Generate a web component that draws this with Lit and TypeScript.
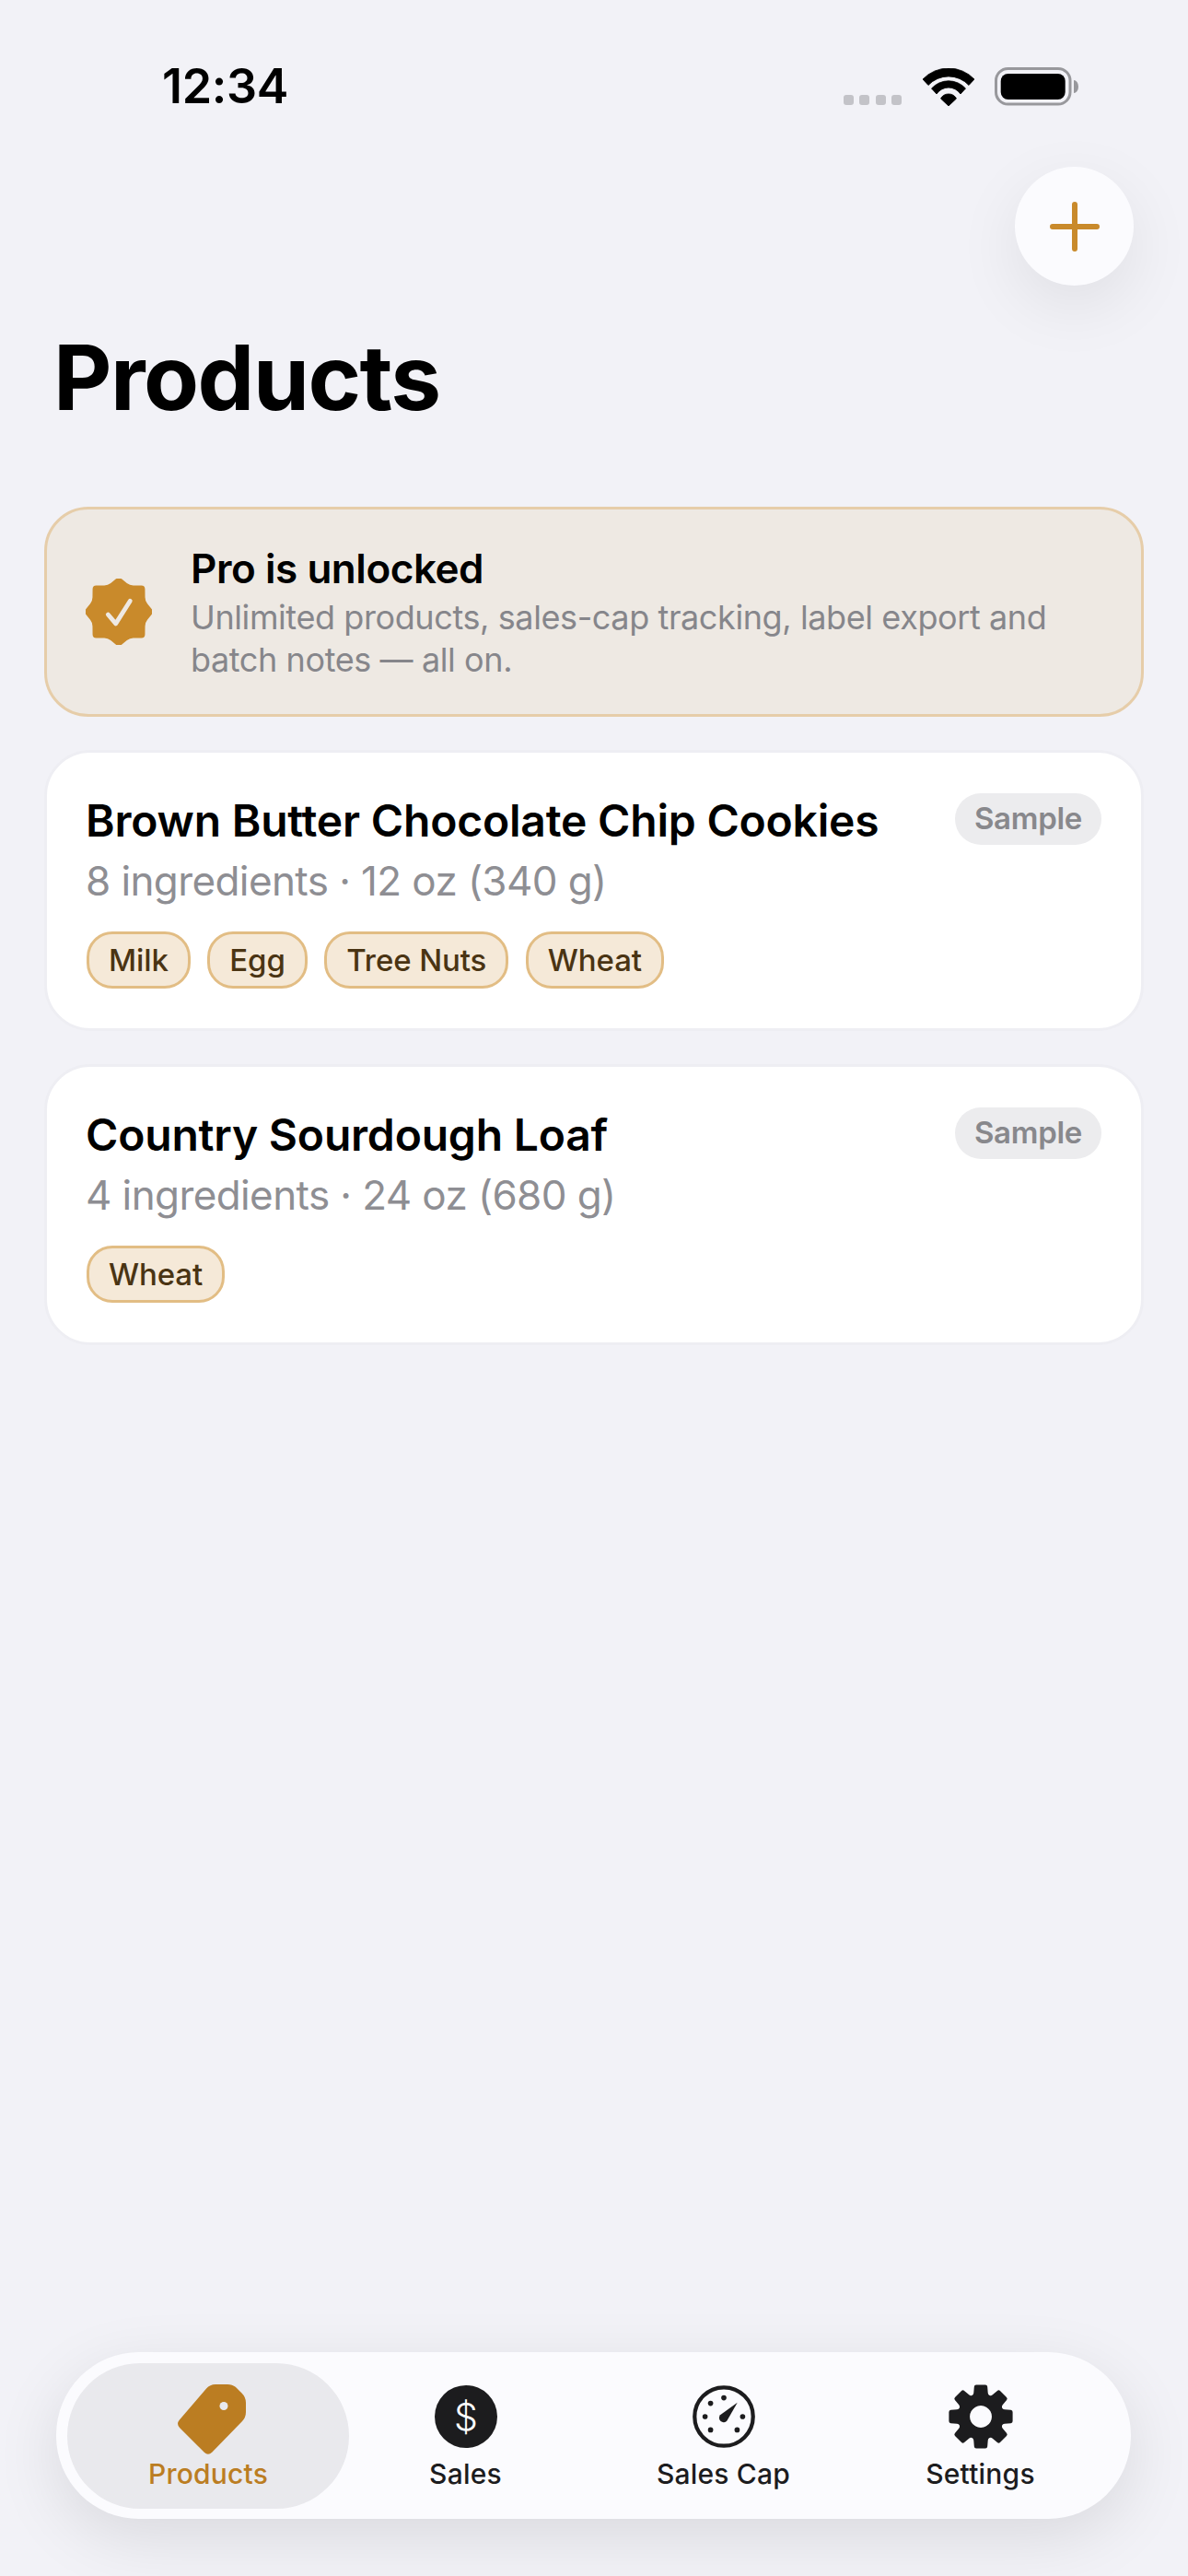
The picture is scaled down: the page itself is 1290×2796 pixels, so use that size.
import { LitElement, html, css, svg } from "lit";
import { customElement } from "lit/decorators.js";

type Pt = [number, number];

// Closed polygon whose corners are rounded by a quadratic curve, `r` units back from each vertex.
function roundPoly(pts: Pt[], r: number): string {
  const n = pts.length;
  let d = "";
  for (let i = 0; i < n; i++) {
    const v = pts[i];
    const prev = pts[(i + n - 1) % n];
    const next = pts[(i + 1) % n];
    const toward = (a: Pt, b: Pt): Pt => {
      const dx = b[0] - a[0];
      const dy = b[1] - a[1];
      const len = Math.hypot(dx, dy);
      const k = Math.min(r, len / 2) / len;
      return [a[0] + dx * k, a[1] + dy * k];
    };
    const a = toward(v, prev);
    const b = toward(v, next);
    d += `${i ? "L" : "M"}${a[0].toFixed(2)} ${a[1].toFixed(2)} Q${v[0].toFixed(2)} ${v[1].toFixed(2)} ${b[0].toFixed(2)} ${b[1].toFixed(2)} `;
  }
  return d + "Z";
}

const polar = (rad: number, ang: number, c = 12): Pt => [c + rad * Math.cos(ang), c + rad * Math.sin(ang)];

const gearPts: Pt[] = [];
for (let i = 0; i < 8; i++) {
  const a = (i * 2 * Math.PI) / 8 - Math.PI / 2;
  gearPts.push(polar(8.6, a - 0.32), polar(12.1, a - 0.2), polar(12.1, a + 0.2), polar(8.6, a + 0.32));
}
const gearPath = roundPoly(gearPts, 0.7) + " M12 7.900 a4.100 4.100 0 1 0 .01 0Z";

const badgePts: Pt[] = [];
for (let i = 0; i < 8; i++) {
  const a = (i * 2 * Math.PI) / 8 - Math.PI / 2;
  const tip = i % 2 === 0 ? 12.7 : 13.4;
  badgePts.push(polar(tip, a), polar(10.3, a + Math.PI / 8));
}
const badgePath = roundPoly(badgePts, 1.3);

const tagPath = roundPoly(
  [[37, 0], [62, 0], [76, 14], [76, 36], [35, 78], [0, 43]],
  6,
);

const dial = [0, 90, 135, 225, 270, 315].map((deg) => {
  const a = ((deg - 90) * Math.PI) / 180;
  return svg`<circle cx=${12 + 7.2 * Math.cos(a)} cy=${12 + 7.2 * Math.sin(a)} r="1" fill="#1c1c1e"></circle>`;
});

@customElement("app-root")
export class AppRoot extends LitElement {
  static styles = css`
    :host {
      display: block;
      width: 1290px;
      height: 2796px;
      background: #f2f2f7;
      font-family: Inter, "Liberation Sans", sans-serif;
      position: relative;
      overflow: hidden;
      color: #000;
    }
    .status {
      height: 181px;
      display: flex;
      justify-content: space-between;
      align-items: flex-start;
      box-sizing: border-box;
      padding: 63px 119px 0 176px;
    }
    .time {
      font-size: 52px;
      line-height: 62px;
      font-weight: 600;
      letter-spacing: -0.3px;
    }
    .sys {
      display: flex;
      align-items: flex-end;
      margin-top: 10px;
    }
    .dots {
      display: flex;
      gap: 6.5px;
      margin-right: 23px;
      margin-bottom: 1px;
    }
    .dots i {
      width: 11px;
      height: 11px;
      border-radius: 3px;
      background: #c3c3c8;
    }
    .wifi { width: 56px; height: 41px; margin-right: 22px; display: block; }
    .batt { width: 91px; height: 42px; display: block; }
    .fab-row {
      display: flex;
      justify-content: flex-end;
      padding-right: 59px;
      height: 129px;
    }
    .fab {
      width: 129px;
      height: 129px;
      border-radius: 50%;
      background: #fbfbfe;
      box-shadow: 0 22px 70px rgba(0, 0, 0, 0.08);
      display: flex;
      align-items: center;
      justify-content: center;
    }
    .fab svg { width: 54px; height: 54px; display: block; }
    h1 {
      margin: 41px 0 0;
      padding-left: 58px;
      font-size: 98px;
      line-height: 118px;
      font-weight: 700;
      letter-spacing: -1.5px;
    }
    .list {
      margin-top: 81px;
      padding: 0 48px;
      display: flex;
      flex-direction: column;
      gap: 36px;
    }
    .banner {
      box-sizing: border-box;
      height: 228px;
      border: 3px solid #e6cda9;
      border-radius: 48px;
      background: #eee9e3;
      display: flex;
      align-items: center;
      padding-left: 42px;
    }
    .banner svg { width: 72px; height: 72px; flex: none; display: block; margin-right: 42px; }
    .banner .t { font-size: 44px; line-height: 54px; font-weight: 600; letter-spacing: -0.45px; }
    .banner .s { font-size: 36px; line-height: 46px; color: #86868b; margin-top: 3px; letter-spacing: -0.4px; }
    .card {
      box-sizing: border-box;
      height: 305px;
      background: #fff;
      border: 3px solid #eeeef3;
      border-radius: 50px;
      padding: 44px 42px 0;
      position: relative;
    }
    .title { font-size: 48px; line-height: 60px; font-weight: 600; letter-spacing: -0.2px; }
    .sub { font-size: 44px; line-height: 56px; color: #8e8e93; margin-top: 7px; letter-spacing: -0.6px; }
    .pill {
      position: absolute;
      right: 43px;
      top: 44px;
      height: 56px;
      padding: 0 21px;
      border-radius: 28px;
      background: #ececee;
      color: #88888c;
      font-size: 33px;
      font-weight: 600;
      line-height: 55px;
      letter-spacing: -0.3px;
    }
    .tags { display: flex; gap: 18.5px; margin: 27px 0 0 1px; }
    .tag {
      box-sizing: border-box;
      height: 62px;
      padding: 0 21px;
      border: 3px solid #e2bd84;
      border-radius: 28px;
      background: #f5e9d8;
      color: #4a3413;
      font-size: 33px;
      font-weight: 500;
      line-height: 56px;
      letter-spacing: -0.1px;
    }
    .tabbar {
      position: absolute;
      left: 61px;
      top: 2553px;
      width: 1167px;
      height: 181px;
      box-sizing: border-box;
      border-radius: 90px;
      background: #fbfbfe;
      box-shadow: 0 20px 70px rgba(0, 0, 0, 0.1);
      display: grid;
      grid-template-columns: 304px 257px 303px 255px;
      padding: 12px 12px 11px;
    }
    .tab {
      display: flex;
      flex-direction: column;
      align-items: center;
      color: #1c1c1e;
      font-size: 30px;
      font-weight: 500;
      line-height: 36px;
      letter-spacing: 0.2px;
      padding-top: 24px;
    }
    .tab svg { width: 68px; height: 68px; display: block; margin-bottom: 10px; }
    .tab svg.tagi { width: 76px; height: 78px; margin: -1px 0 1px 6px; }
    .tab svg.gear { width: 70px; height: 70px; margin: -1px 0 9px; }
    .tab.on {
      background: #e9e9ed;
      border-radius: 79px;
      color: #bb7d22;
      width: 306px;
    }
  `;

  render() {
    return html`
      <div class="status">
        <div class="time">12:34</div>
        <div class="sys">
          <div class="dots"><i></i><i></i><i></i><i></i></div>
          <svg class="wifi" viewBox="0 0 56 41">
            <path d="M0 12 A38.700 38.700 0 0 1 56 12 L50 18.500 A30 30 0 0 0 6 18.500 Z" fill="#000" stroke="#000" stroke-width="0.800" stroke-linejoin="round"></path>
            <path d="M9.500 22 A25 25 0 0 1 46.500 22 L41 28 A15.600 15.600 0 0 0 15 28 Z" fill="#000" stroke="#000" stroke-width="0.800" stroke-linejoin="round"></path>
            <path d="M19.500 33 A9.700 9.700 0 0 1 36.500 33 L28 41 Z" fill="#000" stroke="#000" stroke-width="0.800" stroke-linejoin="round"></path>
          </svg>
          <svg class="batt" viewBox="0 0 91 42">
            <rect x="1.500" y="1.500" width="80.500" height="38.500" rx="13" fill="none" stroke="#98989c" stroke-width="3"></rect>
            <rect x="6.700" y="7" width="70" height="28" rx="8" fill="#000"></rect>
            <path d="M86 14 a5 7 0 0 1 0 14Z" fill="#98989c"></path>
          </svg>
        </div>
      </div>
      <div class="fab-row">
        <div class="fab">
          <svg viewBox="0 0 54 54"><path d="M27 3V51M3 27H51" stroke="#c98a2b" stroke-width="6" stroke-linecap="round" fill="none"></path></svg>
        </div>
      </div>
      <h1>Products</h1>
      <div class="list">
        <div class="banner">
          <svg viewBox="0 0 24 24">
            <path d=${badgePath} fill="#c98a2b"></path>
            <path d="M8.100 13 L10.900 16.300 L16.100 8.100" fill="none" stroke="#eee9e3" stroke-width="1.600" stroke-linecap="round" stroke-linejoin="round"></path>
          </svg>
          <div>
            <div class="t">Pro is unlocked</div>
            <div class="s">Unlimited products, sales-cap tracking, label export and<br />batch notes — all on.</div>
          </div>
        </div>
        <div class="card">
          <div class="title">Brown Butter Chocolate Chip Cookies</div>
          <div class="sub">8 ingredients · 12 oz (340 g)</div>
          <div class="tags">
            <span class="tag">Milk</span><span class="tag">Egg</span><span class="tag">Tree Nuts</span><span class="tag">Wheat</span>
          </div>
          <span class="pill">Sample</span>
        </div>
        <div class="card">
          <div class="title">Country Sourdough Loaf</div>
          <div class="sub">4 ingredients · 24 oz (680 g)</div>
          <div class="tags"><span class="tag">Wheat</span></div>
          <span class="pill">Sample</span>
        </div>
      </div>
      <div class="tabbar">
        <div class="tab on">
          <svg class="tagi" viewBox="0 0 76 78">
            <path fill="#bb7d22" d=${tagPath}></path>
            <circle cx="52" cy="23.500" r="4.500" fill="#e9e9ed"></circle>
          </svg>
          Products
        </div>
        <div class="tab">
          <svg viewBox="0 0 68 68">
            <circle cx="34" cy="34" r="34" fill="#1c1c1e"></circle>
            <text x="34" y="49" text-anchor="middle" font-size="41" font-weight="300" fill="#fff" font-family="Inter, sans-serif">$</text>
          </svg>
          Sales
        </div>
        <div class="tab">
          <svg viewBox="0 0 24 24">
            <circle cx="12" cy="12" r="11.200" fill="none" stroke="#1c1c1e" stroke-width="1.500"></circle>
            ${dial}
            <path d="M17.200 6.600 L13.200 13.600 A1.700 1.700 0 0 1 10.600 11.400 Z" fill="#1c1c1e"></path>
          </svg>
          Sales Cap
        </div>
        <div class="tab">
          <svg class="gear" viewBox="0 0 24 24">
            <path fill-rule="evenodd" fill="#1c1c1e" d=${gearPath}></path>
          </svg>
          Settings
        </div>
      </div>
    `;
  }
}
